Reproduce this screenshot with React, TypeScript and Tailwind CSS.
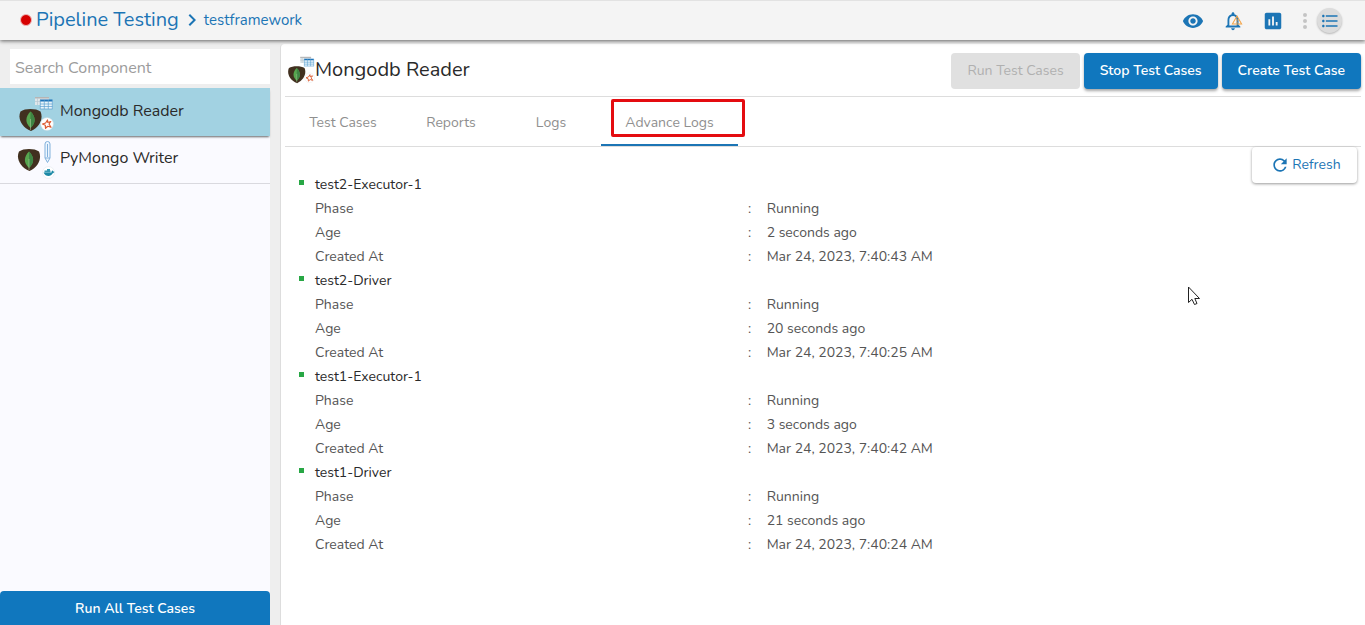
import React from "react";
import { MdAssessment, MdChevronRight, MdFormatListBulleted, MdNotificationsNone, MdRefresh, MdVisibility, MdWarningAmber } from "react-icons/md";

type Pod = { name: string; phase: string; age: string; createdAt: string };

const pods: Pod[] = [
  { name: "test2-Executor-1", phase: "Running", age: "2 seconds ago", createdAt: "Mar 24, 2023, 7:40:43 AM" },
  { name: "test2-Driver", phase: "Running", age: "20 seconds ago", createdAt: "Mar 24, 2023, 7:40:25 AM" },
  { name: "test1-Executor-1", phase: "Running", age: "3 seconds ago", createdAt: "Mar 24, 2023, 7:40:42 AM" },
  { name: "test1-Driver", phase: "Running", age: "21 seconds ago", createdAt: "Mar 24, 2023, 7:40:24 AM" },
];

function Shield() {
  return (
    <g>
      <path d="M1.500 3.500C6 .2 17 .2 21.500 3.500C24.500 10 21 19 12 23C2 19-1.500 10 1.500 3.500Z" fill="#41301f" />
      <path d="M11.500 3.500C6 9 6 15 11.500 20C17 15 17 9 11.500 3.500Z" fill="#57a64f" />
      <path d="M11.500 3.500C17 9 17 15 11.500 20Z" fill="#3f8544" />
      <path d="M11.500 11V22" stroke="#b9d3aa" strokeWidth="0.500" />
    </g>
  );
}

function ReaderIcon({ className }: { className: string }) {
  return (
    <svg viewBox="0 0 36 36" className={className} aria-hidden="true">
      <path d="M17 1.500H31V9H17Z" fill="#dfe6ea" />
      <path d="M17 1H31V2.500H17Z" fill="#b5b5b5" />
      <path d="M17 5.500H22M19.500 2V9" stroke="#b8c7d1" strokeWidth="0.700" />
      <path d="M22 4H34.500V13H22Z" fill="#e9f4fa" />
      <path d="M22 3.500H34.500V5.500H22Z" fill="#1d73b8" />
      <path d="M22 8H34.500M22 10.500H34.500M22 13H34.500M22.300 4V13M26.300 4V13M30.300 4V13M34.300 4V13" stroke="#5ba0d0" strokeWidth="0.700" />
      <g transform="translate(1 12)"><Shield /></g>
      <circle cx="29" cy="28" r="6.300" fill="#fff" stroke="#e6e6e6" strokeWidth="0.500" />
      <path d="M29.500 24L29.800 26.500L32.800 25.500L31 28L33 31.300L29.800 30.300L27.500 32.300L27.300 29.300L24.500 28L27.600 27Z" fill="none" stroke="#dc5b32" strokeWidth="1.200" strokeLinejoin="round" />
    </svg>
  );
}

function WriterIcon({ className }: { className: string }) {
  return (
    <svg viewBox="0 0 38 40" className={className} aria-hidden="true">
      <g transform="translate(0.500 8)"><Shield /></g>
      <path d="M28 4Q28 1.500 30.500 1.500T33 4V18L30.500 22.500L28 18ZM30.500 4V17M28 18H33" fill="#edf6ff" stroke="#82b1dc" strokeWidth="1" />
      <circle cx="31.500" cy="32.500" r="6" fill="#fff" stroke="#dfe4ea" strokeWidth="0.500" />
      <path d="M26.500 32.500H34.500C34.500 31 35 30.500 35.500 30.500C36 31.500 37 31.500 37.500 32C36.500 33 36 33 35.500 33.500C34 37 28.500 37 26.500 32.500Z" fill="#1c88a5" />
      <path d="M27.500 30.500H33.500V32.500H27.500ZM30 29H33V30.500H30Z" fill="#3499b3" />
    </svg>
  );
}

function PodDetails({ pod }: { pod: Pod }) {
  const rows = [["Phase", pod.phase], ["Age", pod.age], ["Created At", pod.createdAt]];
  return (
    <li className="flex gap-[11px]">
      <span className="mt-[7px] h-[5px] w-[5px] shrink-0 bg-[#28a745]" />
      <table className="w-full table-fixed text-left text-[#555]">
        <caption className="h-6 text-left leading-6 text-[#2a2a2a]">{pod.name}</caption>
        <colgroup>
          <col className="w-[46.2%]" />
          <col className="w-[2%]" />
          <col />
        </colgroup>
        <tbody>
          {rows.map(([label, value]) => (
            <tr key={label} className="h-6">
              <th scope="row" className="p-0 font-normal">{label}</th>
              <td className="p-0">:</td>
              <td className="p-0">{value}</td>
            </tr>
          ))}
        </tbody>
      </table>
    </li>
  );
}

const actionButton = "h-9 rounded bg-[#1077be] px-4 font-semibold text-white shadow-[0_2px_3px_rgba(0,0,0,0.35)]";

export default function App() {
  return (
    <div className="relative flex min-h-screen flex-col bg-[#eee] font-['Nunito','Lato',sans-serif] text-[14px] leading-6">
      <header className="relative z-10 flex h-10 items-center justify-between border-t border-[#e2e2e2] bg-[#f4f4f4] pr-[23px] pl-5 text-[#1c75b5] shadow-[0_1px_4px_rgba(0,0,0,0.6)]">
        <nav aria-label="Breadcrumb" className="flex items-center pb-px">
          <span className="mr-1 h-3 w-3 rounded-full border border-[#efb5b5] bg-[#d60000]" />
          <a href="#pipeline" className="text-[20px]">Pipeline Testing</a>
          <MdChevronRight className="ml-px h-6 w-6" />
          <a href="#framework" className="text-[15px]">testframework</a>
        </nav>
        <div className="flex items-center">
          <button aria-label="View" className="mr-[18px]"><MdVisibility className="h-[22px] w-[22px]" /></button>
          <button aria-label="Alerts" className="relative mr-[18px]">
            <MdNotificationsNone className="h-[22px] w-[22px]" />
            <MdWarningAmber className="absolute top-1 left-[9px] h-3 w-3 text-[#f3a347]" />
          </button>
          <button aria-label="Statistics" className="mr-[19px]"><MdAssessment className="h-[22px] w-[22px]" /></button>
          <button aria-label="More" className="mr-[10px] flex flex-col gap-[2px]">
            <span className="h-1 w-1 rounded-full bg-[#c4c4c4]" />
            <span className="h-1 w-1 rounded-full bg-[#c4c4c4]" />
            <span className="h-1 w-1 rounded-full bg-[#c4c4c4]" />
          </button>
          <button aria-label="Component list" className="flex h-[25px] w-[25px] items-center justify-center rounded-full bg-[#dcdcdc] shadow-[0_1px_2px_rgba(0,0,0,0.25)]">
            <MdFormatListBulleted className="h-5 w-5" />
          </button>
        </div>
      </header>

      <div className="flex flex-1 gap-[10px] pt-1">
        <aside className="flex w-[270px] shrink-0 flex-col">
          <input aria-label="Search Component" placeholder="Search Component" className="mt-[5px] ml-[10px] h-[35px] bg-white px-[5px] pt-[3px] text-[16px] text-[#444] outline-none placeholder:text-[#9c9c9c]" />
          <div className="mt-1 flex flex-1 flex-col bg-[#fafaff]">
            <button className="flex h-12 items-center bg-[#a2d2e2] pl-[18px] text-left text-[16px] text-[#2a2a2a] shadow-[0_2px_2px_-1px_rgba(0,0,0,0.6)]">
              <ReaderIcon className="mt-[3px] h-9 w-9" />
              <span className="mb-[3px] ml-[6px]">Mongodb Reader</span>
            </button>
            <button className="flex h-12 items-center border-b border-[#d9d9df] pl-[17px] text-left text-[16px] text-[#2a2a2a]">
              <WriterIcon className="h-10 w-[38px]" />
              <span className="mb-[3px] ml-[5px]">PyMongo Writer</span>
            </button>
            <button className="mt-auto h-[34px] rounded-t bg-[#1077be] pt-px font-semibold text-white">Run All Test Cases</button>
          </div>
        </aside>

        <main className="min-w-0 flex-1 rounded-tl border-l border-[#ddd] bg-white pr-1 pl-1">
          <div className="flex h-[53px] items-center justify-between border-b border-[#ddd]">
            <h1 className="flex items-center text-[20px] text-[#2a2a2a]">
              <ReaderIcon className="ml-[2px] h-7 w-7" />
              Mongodb Reader
            </h1>
            <div className="flex gap-1 pt-px">
              <button disabled className="h-9 rounded bg-[#e0e0e0] px-4 text-[#b0b0b0]">Run Test Cases</button>
              <button className={actionButton}>Stop Test Cases</button>
              <button className={actionButton}>Create Test Case</button>
            </div>
          </div>
          <div role="tablist" className="flex h-[50px] border-b border-[#ddd] text-[#8f8f8f]">
            <button role="tab" aria-selected="false" className="w-[116px] pt-[2px]">Test Cases</button>
            <button role="tab" aria-selected="false" className="w-[100px] pt-[2px]">Reports</button>
            <button role="tab" aria-selected="false" className="w-[100px] pt-[2px]">Logs</button>
            <button role="tab" aria-selected="true" className="relative w-[137px] border-b-2 border-[#1c75b5] pt-1">
              Advance Logs
              <span className="absolute top-[2px] left-[10px] h-[38px] w-[134px] rounded-[2px] border-3 border-[#e40c10]" />
            </button>
          </div>
          <div className="flex items-start">
            <ul className="min-w-0 flex-1 pt-[26px] pl-[14px]">
              {pods.map((pod) => <PodDetails key={pod.name} pod={pod} />)}
            </ul>
            <button className="mr-1 flex h-9 w-[105px] shrink-0 items-center justify-center gap-[2px] rounded bg-white pl-[2px] text-[#1c75b5] shadow-[0_1px_3px_rgba(0,0,0,0.4)]">
              <MdRefresh className="h-5 w-5" />
              Refresh
            </button>
          </div>
        </main>
      </div>
      <svg viewBox="0 0 14 22" className="pointer-events-none absolute top-[286px] left-[1187px] h-[22px] w-[14px]" aria-hidden="true">
        <path d="M1.500 1V16.500L5 13.300L7.500 18.500L10 17.500L7.800 12.500H12.500Z" fill="#fff" stroke="#222" strokeWidth="1" />
      </svg>
    </div>
  );
}
